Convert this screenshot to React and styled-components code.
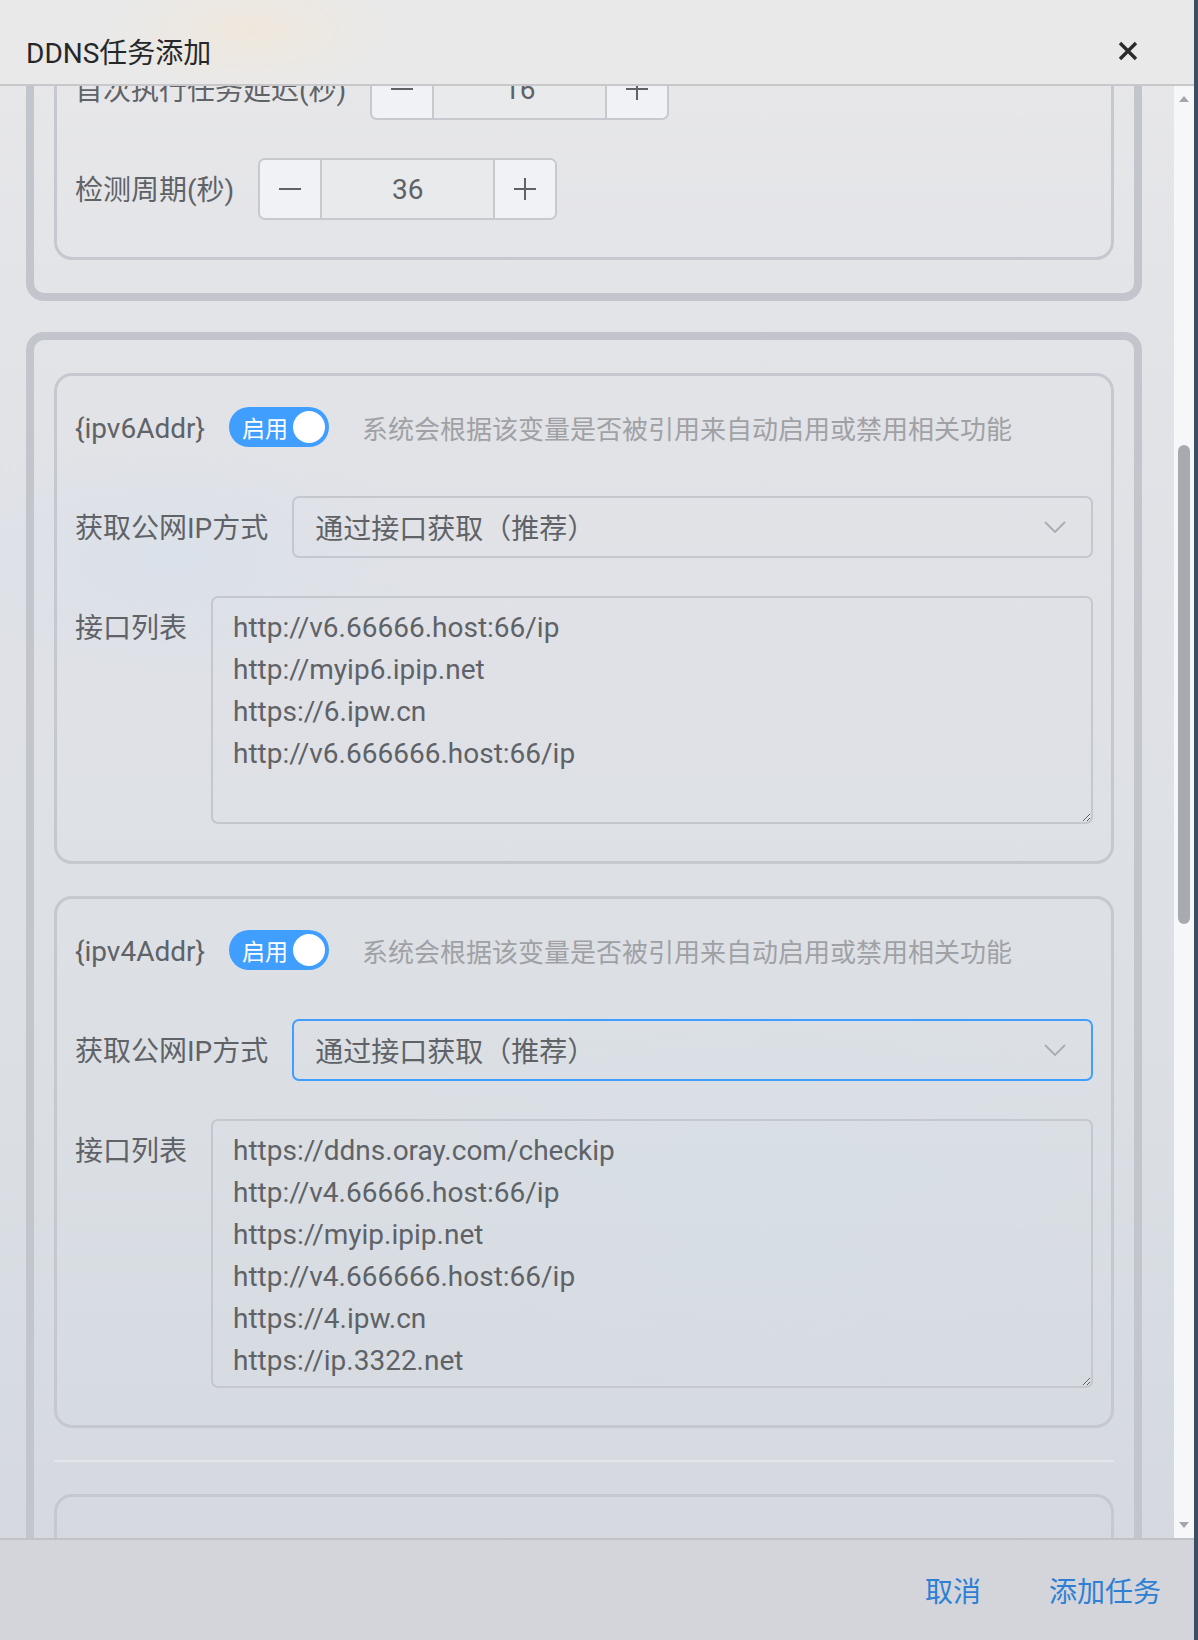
import React, { useLayoutEffect, useRef } from 'react';
import styled, { createGlobalStyle } from 'styled-components';

const GlobalStyle = createGlobalStyle`
    html, body {
        margin: 0;
        padding: 0;
    }
    body {
        background: #3b4e64;
        font-family: Roboto, "Noto Sans CJK SC", sans-serif;
    }
    * {
        box-sizing: border-box;
    }
`

const Dialog = styled.div`
    width: 1194px;
    height: 1640px;
    display: flex;
    flex-direction: column;
    overflow: hidden;
    background:
        radial-gradient(ellipse 260px 120px at 170px 560px, rgba(214, 224, 236, 0.55), transparent),
        radial-gradient(ellipse 380px 220px at 760px 1180px, rgba(212, 222, 230, 0.5), transparent),
        linear-gradient(180deg, #e8e8e9 0%, #e3e4e8 18%, #dfe1e6 40%, #dce0e5 62%, #d7dce2 82%, #d4d8de 100%);
`

const Header = styled.header`
    flex: none;
    height: 86px;
    padding: 17px 56px 0 26px;
    display: flex;
    align-items: center;
    justify-content: space-between;
    border-bottom: 2px solid #c8c8ca;
    background:
        radial-gradient(ellipse 140px 60px at 250px 30px, rgba(244, 230, 210, 0.55), transparent),
        #e9e9e9;
`

const Title = styled.h2`
    margin: 0;
    font-size: 28px;
    font-weight: 400;
    color: #262729;
`

const CloseButton = styled.button`
    border: none;
    background: none;
    padding: 0;
    width: 20px;
    height: 20px;
    display: flex;
    color: #2a2b2d;
`

const Body = styled.div`
    flex: 1;
    min-height: 0;
    display: flex;
`

const Scroller = styled.div`
    flex: 1;
    overflow-y: auto;
    padding: 0 32px 0 26px;
    scrollbar-width: none;

    &::-webkit-scrollbar {
        display: none;
    }
`

const Stack = styled.div`
    display: flex;
    flex-direction: column;
    gap: 31px;
    padding-bottom: 40px;
`

const OuterCard = styled.section`
    border: 8px solid #c2c5cc;
    border-radius: 18px;
    padding: 33px 20px;
    display: flex;
    flex-direction: column;
    gap: 32px;
`

const InnerCard = styled.div`
    border: 3px solid #c5c8ce;
    border-radius: 18px;
    padding: 20px 18px 37px;
    display: flex;
    flex-direction: column;
    gap: 38px;
    min-height: ${p => p.$minHeight || 0}px;
`

const Divider = styled.div`
    height: 2px;
    background: #e3e6eb;
`

const Row = styled.div`
    display: flex;
    align-items: ${p => (p.$top ? 'flex-start' : 'center')};
    min-height: 62px;
`

const Label = styled.span`
    height: 62px;
    padding-top: 2px;
    font-size: 28px;
    line-height: 62px;
    color: #5f6266;
    margin-right: 24px;
    white-space: nowrap;
`

const Hint = styled.span`
    font-size: 26px;
    color: #9fa1a5;
    margin-left: 33px;
    white-space: nowrap;
`

const Switch = styled.span`
    display: inline-flex;
    align-items: center;
    justify-content: space-between;
    width: 100px;
    height: 40px;
    border-radius: 20px;
    background: #409eff;
    padding: 0 4px 0 13px;
    font-size: 23px;
    color: #fff;
    flex: none;
`

const Knob = styled.span`
    width: 32px;
    height: 32px;
    border-radius: 50%;
    background: #fff;
`

const NumberBox = styled.div`
    display: flex;
    width: 299px;
    height: 62px;
    border: 2px solid #c6c9ce;
    border-radius: 7px;
    overflow: hidden;
    flex: none;
`

const Step = styled.span`
    width: 62px;
    display: flex;
    align-items: center;
    justify-content: center;
    background: #f1f2f5;
    color: #606266;
    border-left: ${p => (p.$side === 'right' ? '2px solid #c6c9ce' : 'none')};
    border-right: ${p => (p.$side === 'left' ? '2px solid #c6c9ce' : 'none')};
`

const NumberValue = styled.span`
    flex: 1;
    display: flex;
    align-items: center;
    justify-content: center;
    background: #e9eaec;
    font-size: 28px;
    color: #5f6266;
`

const Select = styled.div`
    flex: 1;
    height: 62px;
    border: 2px solid ${p => (p.$focused ? '#409eff' : '#c4c7cd')};
    border-radius: 7px;
    display: flex;
    align-items: center;
    justify-content: space-between;
    padding: 0 25px 0 21px;
    font-size: 28px;
    color: #5f6266;
`

const TextArea = styled.textarea`
    flex: 1;
    height: ${p => p.$height}px;
    border: 2px solid #c4c7cd;
    border-radius: 7px;
    background: transparent;
    padding: 9px 20px;
    font: 28px/42px Roboto, "Noto Sans CJK SC", sans-serif;
    color: #5f6266;
    resize: vertical;
    outline: none;
    overflow: hidden;
`

const Rail = styled.div`
    flex: none;
    width: 20px;
    background: #f6f7f9;
    display: flex;
    flex-direction: column;
    align-items: center;
`

const Arrow = styled.span`
    height: 26px;
    flex: none;
    display: flex;
    align-items: center;
    justify-content: center;

    &::before {
        content: '';
        border-left: 5px solid transparent;
        border-right: 5px solid transparent;
        border-${p => (p.$down ? 'top' : 'bottom')}: 6px solid #a3a6ab;
    }
`

const Thumb = styled.span`
    width: 12px;
    flex: none;
    border-radius: 6px;
    background: #a7aaaf;
    margin-top: ${p => p.$offset}px;
    height: ${p => p.$length}px;
`

const RailSpacer = styled.span`
    flex: 1;
`

const Footer = styled.footer`
    flex: none;
    height: 102px;
    border-top: 2px solid #bfc2c8;
    background: #d3d5db;
    display: flex;
    align-items: center;
    justify-content: flex-end;
    gap: 68px;
    padding: 0 33px;
`

const FooterButton = styled.button`
    border: none;
    background: none;
    padding: 0;
    font-family: inherit;
    font-size: 28px;
    color: #2d80d3;
    cursor: pointer;
`

const CloseIcon = () => (
    <svg width="20" height="20" viewBox="0 0 20 20">
        <path d="M2 2 L18 18 M18 2 L2 18" stroke="currentColor" strokeWidth="3.4" />
    </svg>
)

const Minus = () => (
    <svg width="22" height="22" viewBox="0 0 22 22">
        <path d="M0 11 H22" stroke="currentColor" strokeWidth="2" />
    </svg>
)

const Plus = () => (
    <svg width="22" height="22" viewBox="0 0 22 22">
        <path d="M0 11 H22 M11 0 V22" stroke="currentColor" strokeWidth="2" />
    </svg>
)

const Chevron = () => (
    <svg width="22" height="12" viewBox="0 0 22 12">
        <path d="M1 1 L11 11 L21 1" fill="none" stroke="#a8abb2" strokeWidth="1.8" />
    </svg>
)

function NumberInput({ value }) {
    return (
        <NumberBox>
            <Step $side="left"><Minus /></Step>
            <NumberValue>{value}</NumberValue>
            <Step $side="right"><Plus /></Step>
        </NumberBox>
    )
}

function AddrCard({ name, focused, urls, height }) {
    return (
        <InnerCard>
            <Row>
                <Label>{name}</Label>
                <Switch>启用<Knob /></Switch>
                <Hint>系统会根据该变量是否被引用来自动启用或禁用相关功能</Hint>
            </Row>
            <Row>
                <Label>获取公网IP方式</Label>
                <Select $focused={focused}>
                    <span>通过接口获取（推荐）</span>
                    <Chevron />
                </Select>
            </Row>
            <Row $top>
                <Label>接口列表</Label>
                <TextArea $height={height} readOnly value={urls.join('\n')} />
            </Row>
        </InnerCard>
    )
}

const ipv6Urls = [
    'http://v6.66666.host:66/ip',
    'http://myip6.ipip.net',
    'https://6.ipw.cn',
    'http://v6.666666.host:66/ip',
]

const ipv4Urls = [
    'https://ddns.oray.com/checkip',
    'http://v4.66666.host:66/ip',
    'https://myip.ipip.net',
    'http://v4.666666.host:66/ip',
    'https://4.ipw.cn',
    'https://ip.3322.net',
]

function App() {
    const scrollRef = useRef(null);
    const delayRowRef = useRef(null);

    // keep the dialog body scrolled to the ip settings
    useLayoutEffect(() => {
        const box = scrollRef.current;
        const row = delayRowRef.current;
        box.scrollTop = row.getBoundingClientRect().top - box.getBoundingClientRect().top + 28;
    }, []);

    return (
        <>
            <GlobalStyle />
            <Dialog>
                <Header>
                    <Title>DDNS任务添加</Title>
                    <CloseButton><CloseIcon /></CloseButton>
                </Header>
                <Body>
                    <Scroller ref={scrollRef}>
                        <Stack>
                            <OuterCard>
                                <InnerCard>
                                    <Row ref={delayRowRef}>
                                        <Label>首次执行任务延迟(秒)</Label>
                                        <NumberInput value={16} />
                                    </Row>
                                    <Row>
                                        <Label>检测周期(秒)</Label>
                                        <NumberInput value={36} />
                                    </Row>
                                </InnerCard>
                            </OuterCard>
                            <OuterCard>
                                <AddrCard name="{ipv6Addr}" urls={ipv6Urls} height={228} />
                                <AddrCard name="{ipv4Addr}" urls={ipv4Urls} height={269} focused />
                                <Divider />
                                <InnerCard $minHeight={320} />
                            </OuterCard>
                        </Stack>
                    </Scroller>
                    <Rail>
                        <Arrow />
                        <Thumb $offset={333} $length={479} />
                        <RailSpacer />
                        <Arrow $down />
                    </Rail>
                </Body>
                <Footer>
                    <FooterButton>取消</FooterButton>
                    <FooterButton>添加任务</FooterButton>
                </Footer>
            </Dialog>
        </>
    )
}

export default App;
